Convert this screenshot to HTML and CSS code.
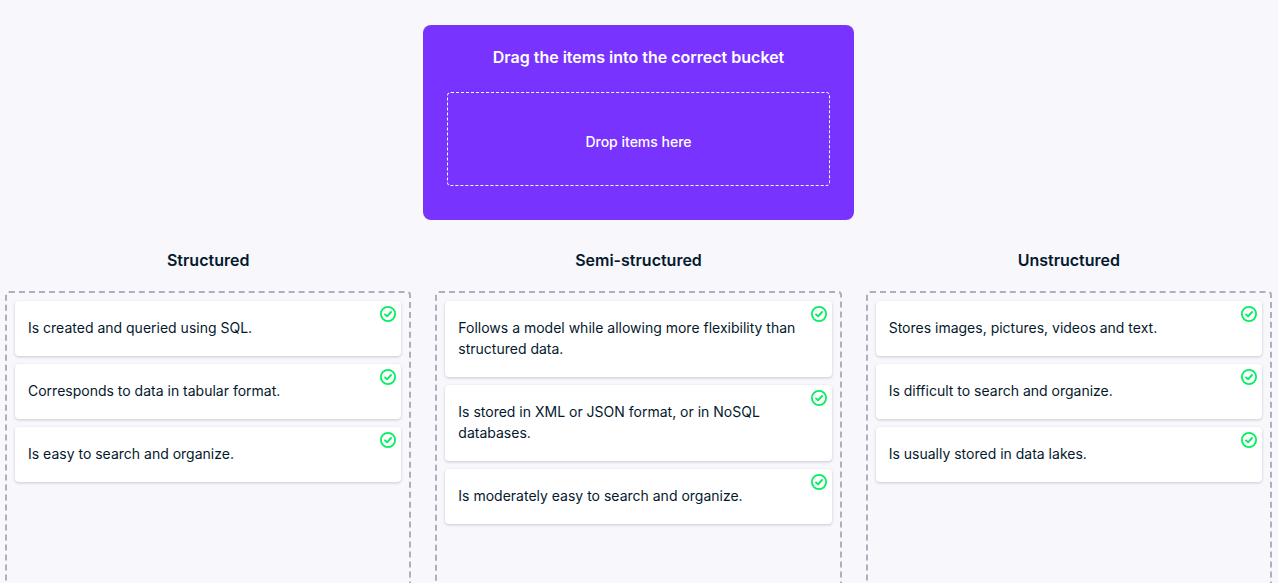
FILE: index.html
```html
<!DOCTYPE html>
<html lang="en">
<head>
<meta charset="utf-8">
<title>Drag the items into the correct bucket</title>
<link rel="stylesheet" href="styles.css">
</head>
<body>
<svg class="sprite" aria-hidden="true">
  <symbol id="check" viewBox="0 0 16 16">
    <circle cx="8" cy="8" r="7.1" fill="none" stroke="currentColor" stroke-width="1.8"/>
    <path d="M5 8.4 7.1 10.3 11 6" fill="none" stroke="currentColor" stroke-width="1.9" stroke-linecap="round" stroke-linejoin="round"/>
  </symbol>
</svg>
<main class="exercise">
  <section class="source">
    <h1 class="source-title">Drag the items into the correct bucket</h1>
    <div class="dropzone">Drop items here</div>
  </section>
  <div class="buckets">
    <section class="bucket">
      <h2 class="bucket-title">Structured</h2>
      <ul class="bucket-list">
        <li class="card">Is created and queried using SQL.<svg class="tick"><use href="#check"/></svg></li>
        <li class="card">Corresponds to data in tabular format.<svg class="tick"><use href="#check"/></svg></li>
        <li class="card">Is easy to search and organize.<svg class="tick"><use href="#check"/></svg></li>
      </ul>
    </section>
    <section class="bucket">
      <h2 class="bucket-title">Semi-structured</h2>
      <ul class="bucket-list">
        <li class="card">Follows a model while allowing more flexibility than structured data.<svg class="tick"><use href="#check"/></svg></li>
        <li class="card">Is stored in XML or JSON format, or in NoSQL databases.<svg class="tick"><use href="#check"/></svg></li>
        <li class="card">Is moderately easy to search and organize.<svg class="tick"><use href="#check"/></svg></li>
      </ul>
    </section>
    <section class="bucket">
      <h2 class="bucket-title">Unstructured</h2>
      <ul class="bucket-list">
        <li class="card">Stores images, pictures, videos and text.<svg class="tick"><use href="#check"/></svg></li>
        <li class="card">Is difficult to search and organize.<svg class="tick"><use href="#check"/></svg></li>
        <li class="card">Is usually stored in data lakes.<svg class="tick"><use href="#check"/></svg></li>
      </ul>
    </section>
  </div>
</main>
</body>
</html>
```
FILE: styles.css
```css
* { box-sizing: border-box; }

body {
  margin: 0;
  background: #f7f7fc;
  color: #05192d;
  font-family: Inter, "Liberation Sans", sans-serif;
  font-size: 14px;
  line-height: 21px;
}

.sprite {
  position: absolute;
  width: 0;
  height: 0;
}

.exercise {
  display: flex;
  flex-direction: column;
  align-items: center;
  height: 100vh;
  padding: 25px 6px 0 5px;
  overflow: hidden;
}

.source {
  flex: none;
  width: calc((100% + 24px) / 3);
  padding: 20px 24px 34px;
  border-radius: 8px;
  background: #7933ff;
  color: #fff;
  text-align: center;
}

.source-title,
.bucket-title {
  margin: 0;
  font-size: 16px;
  font-weight: 600;
  line-height: 24px;
  text-align: center;
}

.dropzone {
  margin-top: 23px;
  padding: 38px 16px 33px;
  border: 1px dashed #fff;
  border-radius: 4px;
  font-weight: 500;
}

.buckets {
  flex: none;
  display: grid;
  grid-template-columns: repeat(3, minmax(0, 1fr));
  gap: 24px;
  width: 100%;
  margin-top: 28px;
}

.bucket {
  display: flex;
  flex-direction: column;
}

.bucket-list {
  display: flex;
  flex: 1;
  flex-direction: column;
  gap: 8px;
  min-height: 400px;
  margin: 19px 0 0;
  padding: 8px;
  border: 2px dashed #abb1bc;
  border-radius: 4px;
  list-style: none;
}

.card {
  position: relative;
  padding: 16px 13px 18px;
  border-radius: 4px;
  background: #fff;
  box-shadow: 0 1px 3px rgba(5, 25, 45, 0.2);
}

.tick {
  position: absolute;
  top: 5px;
  right: 5px;
  width: 16px;
  height: 16px;
  color: #03ef62;
}
```
